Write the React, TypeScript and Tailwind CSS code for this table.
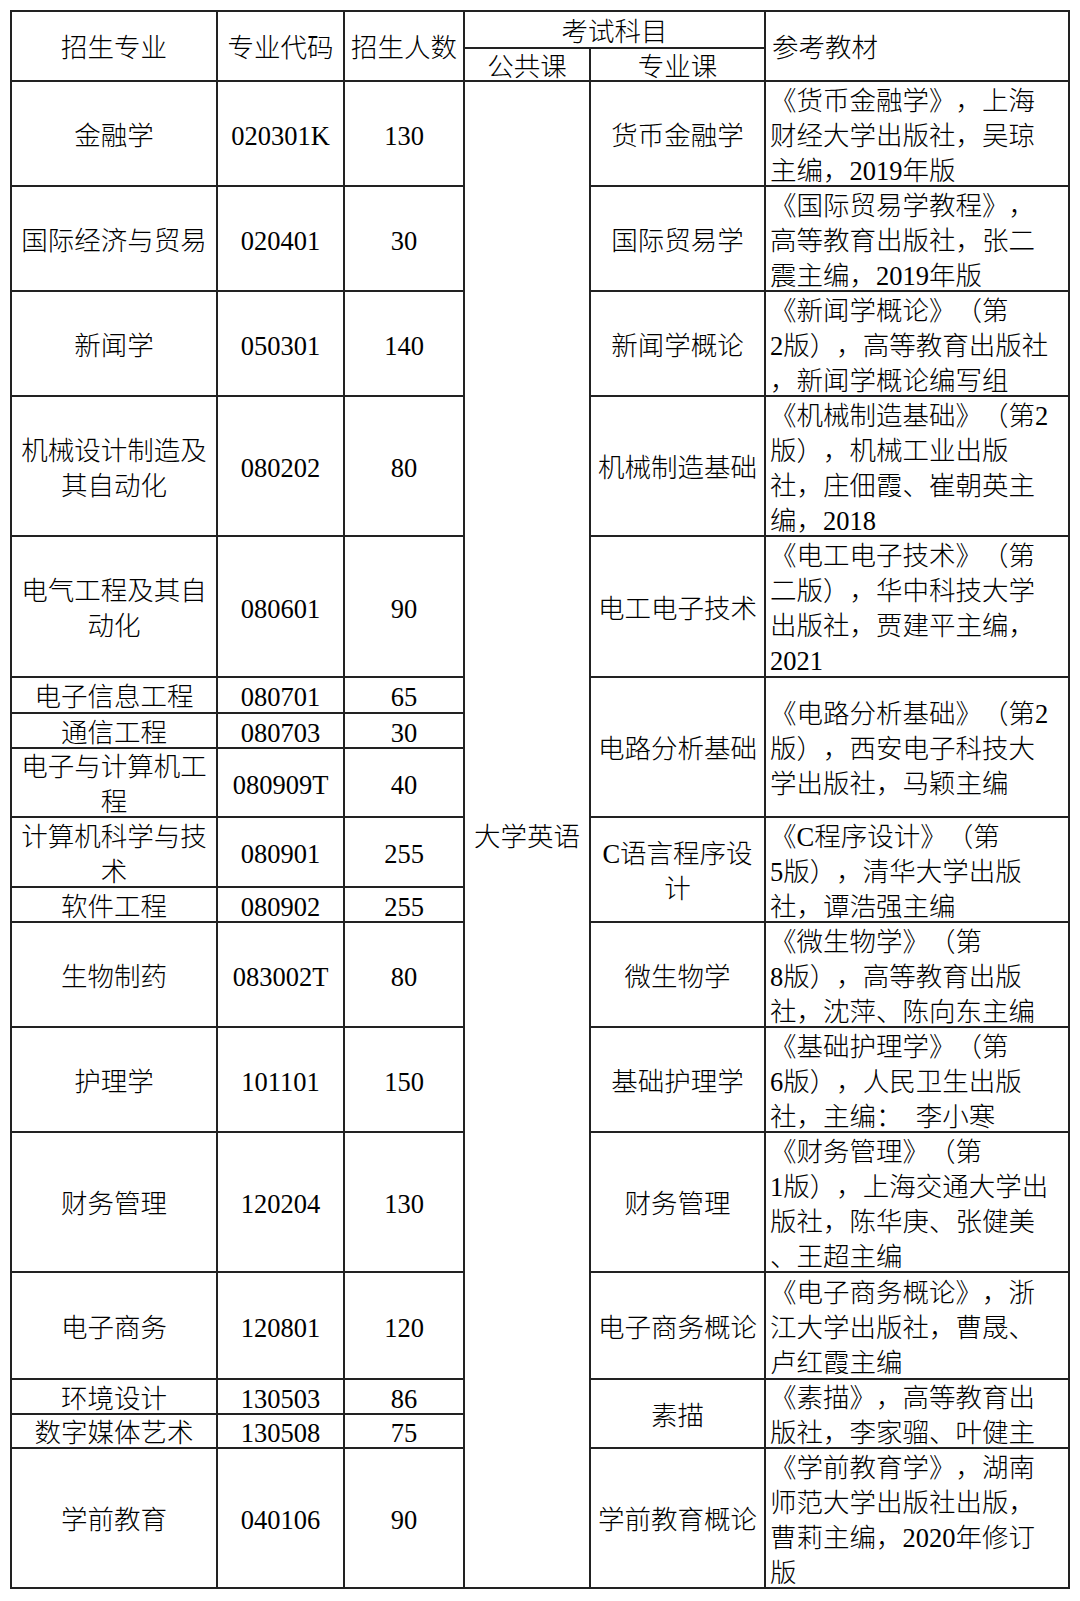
type Major = {
  name: string[];
  code: string;
  count: string;
};

type Course = {
  start: number;
  span: string;
  course: string[];
  books: string[];
};

const majors: Major[] = [
  { name: ['金融学'], code: '020301K', count: '130' },
  { name: ['国际经济与贸易'], code: '020401', count: '30' },
  { name: ['新闻学'], code: '050301', count: '140' },
  { name: ['机械设计制造及', '其自动化'], code: '080202', count: '80' },
  { name: ['电气工程及其自', '动化'], code: '080601', count: '90' },
  { name: ['电子信息工程'], code: '080701', count: '65' },
  { name: ['通信工程'], code: '080703', count: '30' },
  { name: ['电子与计算机工', '程'], code: '080909T', count: '40' },
  { name: ['计算机科学与技', '术'], code: '080901', count: '255' },
  { name: ['软件工程'], code: '080902', count: '255' },
  { name: ['生物制药'], code: '083002T', count: '80' },
  { name: ['护理学'], code: '101101', count: '150' },
  { name: ['财务管理'], code: '120204', count: '130' },
  { name: ['电子商务'], code: '120801', count: '120' },
  { name: ['环境设计'], code: '130503', count: '86' },
  { name: ['数字媒体艺术'], code: '130508', count: '75' },
  { name: ['学前教育'], code: '040106', count: '90' },
];

const courses: Course[] = [
  { start: 0, span: '', course: ['货币金融学'], books: ['《货币金融学》，上海', '财经大学出版社，吴琼', '主编，2019年版'] },
  { start: 1, span: '', course: ['国际贸易学'], books: ['《国际贸易学教程》，', '高等教育出版社，张二', '震主编，2019年版'] },
  { start: 2, span: '', course: ['新闻学概论'], books: ['《新闻学概论》（第', '2版），高等教育出版社', '，新闻学概论编写组'] },
  { start: 3, span: '', course: ['机械制造基础'], books: ['《机械制造基础》（第2', '版），机械工业出版', '社，庄佃霞、崔朝英主', '编，2018'] },
  { start: 4, span: '', course: ['电工电子技术'], books: ['《电工电子技术》（第', '二版），华中科技大学', '出版社，贾建平主编，', '2021'] },
  { start: 5, span: 'row-span-3', course: ['电路分析基础'], books: ['《电路分析基础》（第2', '版），西安电子科技大', '学出版社，马颖主编'] },
  { start: 8, span: 'row-span-2', course: ['C语言程序设', '计'], books: ['《C程序设计》（第', '5版），清华大学出版', '社，谭浩强主编'] },
  { start: 10, span: '', course: ['微生物学'], books: ['《微生物学》（第', '8版），高等教育出版', '社，沈萍、陈向东主编'] },
  { start: 11, span: '', course: ['基础护理学'], books: ['《基础护理学》（第', '6版），人民卫生出版', '社，主编：  李小寒'] },
  { start: 12, span: '', course: ['财务管理'], books: ['《财务管理》（第', '1版），上海交通大学出', '版社，陈华庚、张健美', '、王超主编'] },
  { start: 13, span: '', course: ['电子商务概论'], books: ['《电子商务概论》，浙', '江大学出版社，曹晟、', '卢红霞主编'] },
  { start: 14, span: 'row-span-2', course: ['素描'], books: ['《素描》，高等教育出', '版社，李家骝、叶健主'] },
  { start: 16, span: '', course: ['学前教育概论'], books: ['《学前教育学》，湖南', '师范大学出版社出版，', '曹莉主编，2020年修订', '版'] },
];

// every cell draws its own right and bottom rule; the grid draws left and top
const cell = 'border-r-2 border-b-2 border-[#222] flex flex-col justify-center min-h-0 pt-[5px]';
const center = `${cell} items-center text-center`;

function Lines({ lines }: { lines: string[] }) {
  return (
    <>
      {lines.map((l, i) => (
        <div key={i} className="whitespace-pre">
          {l}
        </div>
      ))}
    </>
  );
}

export default function App() {
  return (
    <div
      className="min-h-[1601px] bg-white pl-[10px] pt-[10px] text-[26.5px] leading-[35px] text-black font-light [text-spacing-trim:space-all]"
      style={{ fontFamily: '"Liberation Serif", "Noto Sans CJK SC", serif' }}
    >
      <div className="inline-grid border-l-2 border-t-2 border-[#222] grid-cols-[206px_127px_120px_126px_175px_304px] grid-rows-[37px_33px_105px_105px_105px_140px_141px_36px_35px_69px_70px_35px_105px_105px_140px_107px_35px_34px_140px]">
        <div className={`${center} row-span-2`}>招生专业</div>
        <div className={`${center} row-span-2`}>专业代码</div>
        <div className={`${center} row-span-2`}>招生人数</div>
        <div className={`${center} col-span-2`}>考试科目</div>
        <div className={`${cell} row-span-2 pl-[6px]`}>参考教材</div>
        <div className={center}>公共课</div>
        <div className={center}>专业课</div>

        {majors.map((m, i) => {
          const c = courses.find((x) => x.start === i);
          return [
            <div key={`n${i}`} className={center}>
              <Lines lines={m.name} />
            </div>,
            <div key={`c${i}`} className={center}>
              {m.code}
            </div>,
            <div key={`k${i}`} className={center}>
              {m.count}
            </div>,
            i === 0 ? (
              <div key="pub" className={`${center} row-span-17`}>
                大学英语
              </div>
            ) : null,
            c ? (
              <div key={`s${i}`} className={`${center} ${c.span}`}>
                <Lines lines={c.course} />
              </div>
            ) : null,
            c ? (
              <div key={`b${i}`} className={`${cell} ${c.span} pl-[4px] overflow-hidden`}>
                <Lines lines={c.books} />
              </div>
            ) : null,
          ];
        })}
      </div>
    </div>
  );
}
